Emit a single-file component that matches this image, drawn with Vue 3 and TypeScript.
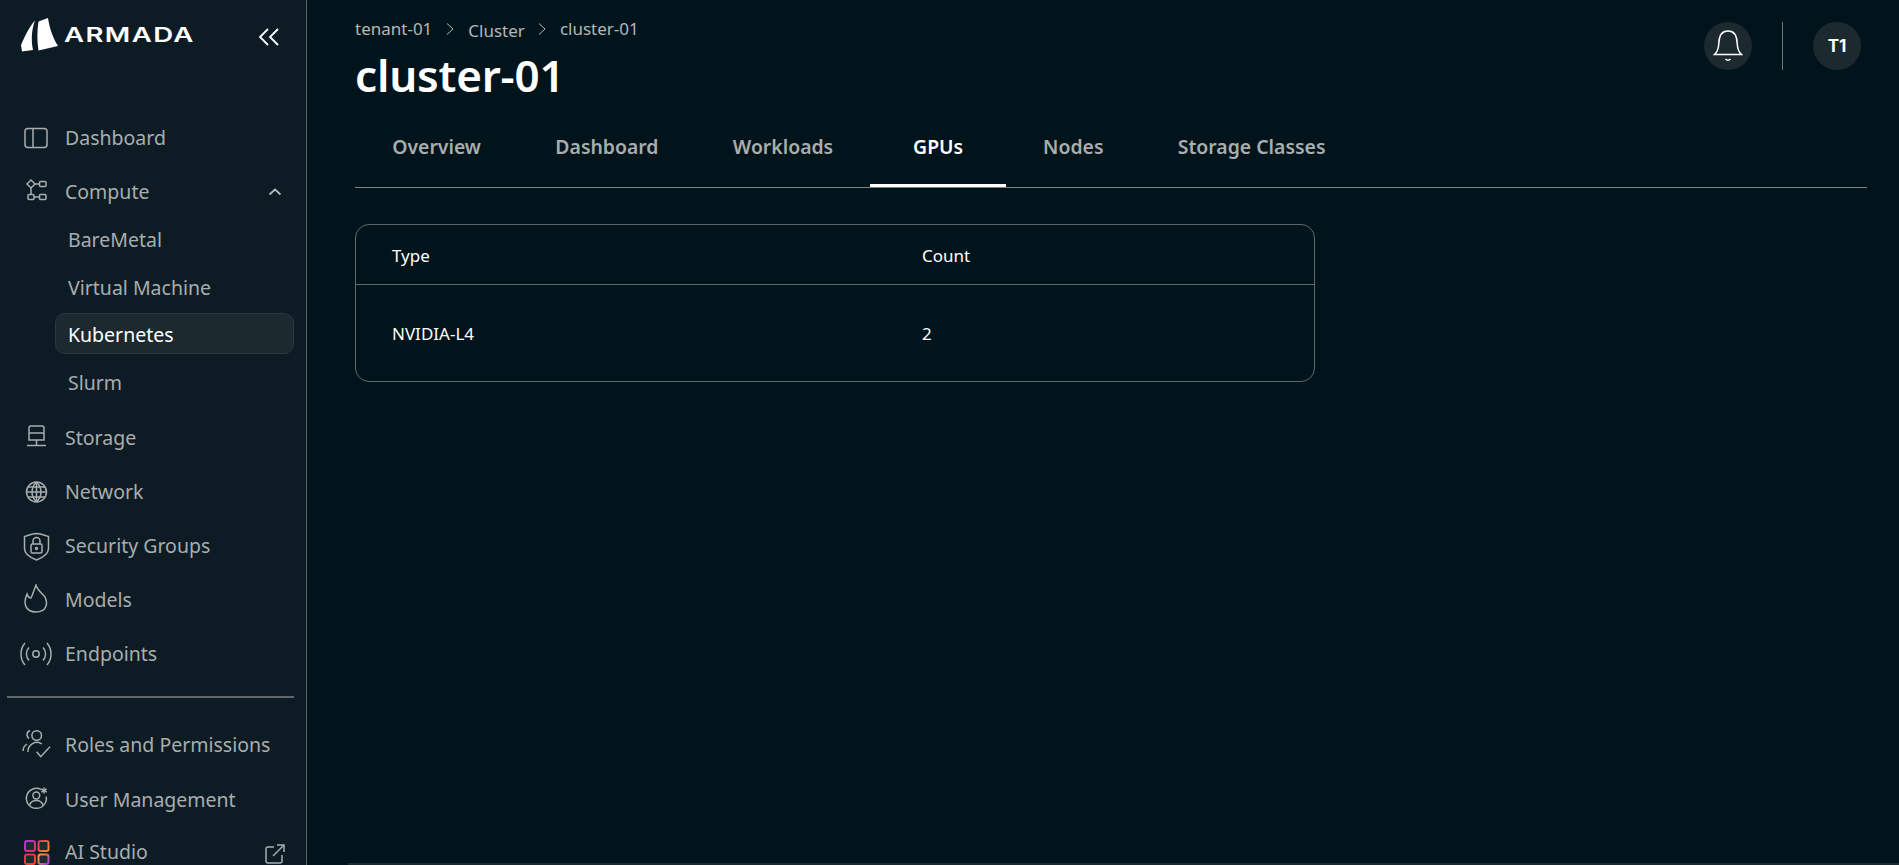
<script setup lang="ts">
interface NavItem {
  label: string
  paths: string[]
  circles?: [number, number, number][]
}

const topItems: NavItem[] = [
  { label: 'Storage', paths: ['M11 4h11a2 2 0 0 1 2 2v12H9V6a2 2 0 0 1 2-2Z', 'M9 11h15', 'M16.5 18v5', 'M7 23.5h19'] },
  {
    label: 'Network',
    paths: ['M6.5 16h20', 'M7.8 11h17.4', 'M7.8 21h17.4', 'M16.5 6v20', 'M16.5 6c-6 6-6 14 0 20', 'M16.5 6c6 6 6 14 0 20'],
    circles: [[16.5, 16, 10]],
  },
  {
    label: 'Security Groups',
    paths: [
      'M4.5 6.5C9 5 12.5 3.8 16.5 3.5c4 .3 7.5 1.5 12 3v12c0 5-5.500 9-12 11.500C10 27.500 4.500 23.500 4.500 18.500Z',
      'M12.500 14h8a1.500 1.500 0 0 1 1.500 1.500v6a1.500 1.500 0 0 1-1.500 1.500h-8a1.500 1.500 0 0 1-1.500-1.500v-6a1.500 1.500 0 0 1 1.500-1.500Z',
      'M13 14v-3a3.500 3.500 0 0 1 7 0v3',
    ],
    circles: [[16.5, 18.5, 1]],
  },
  { label: 'Models', paths: ['M16 1c1 5 6 8 9 12 3 6 2 15-9 15S3 19 7 10c1 3 2 4 4 4 2-4 3-8 5-13Z'] },
  {
    label: 'Endpoints',
    paths: ['M9 9.500a9.500 9.500 0 0 0 0 13', 'M23 9.500a9.500 9.500 0 0 1 0 13', 'M5 5a17 17 0 0 0 0 22', 'M27 5a17 17 0 0 1 0 22'],
    circles: [[16, 16, 3.2]],
  },
]

const bottomItems: NavItem[] = [
  {
    label: 'Roles and Permissions',
    paths: ['M10 1.500a4.500 4.500 0 0 0-1 8', 'M8 23a9 9 0 0 1 14-8', 'M3 22c0-3 1-5 4-7', 'M16.700 22.700l4 5 9.300-10'],
    circles: [[16.7, 6.5, 4.8]],
  },
  {
    label: 'User Management',
    paths: ['M21 5.500a10 10 0 1 0 5.200 7', 'M9.500 21.500c1-3.500 3.500-5 6.800-5s5.800 1.500 6.800 5', 'M24 3.500v6', 'M21.400 5l5.200 3', 'M26.600 5l-5.200 3'],
    circles: [[16.3, 11.5, 3.4]],
  },
]

const tabs = ['Overview', 'Dashboard', 'Workloads', 'GPUs', 'Nodes', 'Storage Classes']
const subItems = ['BareMetal', 'Virtual Machine', 'Kubernetes', 'Slurm']
</script>

<template>
  <div class="page">
    <aside class="sidebar">
      <div class="brand">
        <svg class="logo" width="40" height="36" viewBox="0 0 40 36">
          <path d="M15 2.500C9 9 4.500 19 1 27l1 6.500 11-1.500C11 22 11.500 12 15 2.500Z" fill="#fff" />
          <path d="M28 0l-9.500 3.500c-1.500 9-1.500 20 0 29L38 28C33 20 29.500 10 28 0Z" fill="#fff" />
        </svg>
        <span class="wordmark">ARMADA</span>
        <svg class="collapse" width="24" height="20" viewBox="0 0 24 20" fill="none" stroke="#fff" stroke-width="1.8">
          <path d="M11 2L3 10l8 8" />
          <path d="M21 2l-8 8 8 8" />
        </svg>
      </div>

      <nav class="nav first">
        <a class="item">
          <svg class="icon" width="32" height="32" viewBox="0 0 32 32">
            <path d="M8 6.500h16a3 3 0 0 1 3 3v13a3 3 0 0 1-3 3H8a3 3 0 0 1-3-3v-13a3 3 0 0 1 3-3Z" />
            <path d="M13 6.500v19" />
          </svg>
          <span>Dashboard</span>
        </a>
        <a class="item">
          <svg class="icon" width="32" height="32" viewBox="0 0 32 32">
            <path d="M11 4l4 4-4 4-4-4Z" />
            <path d="M15 8h4.500" />
            <path d="M11 12v6.500" />
            <path d="M14 21h5" />
            <rect x="19.500" y="5.500" width="6.500" height="5" rx="1" />
            <rect x="8" y="18.500" width="6" height="5" rx="1" />
            <rect x="19.500" y="18.500" width="6.500" height="5" rx="1" />
          </svg>
          <span>Compute</span>
          <svg class="caret" width="14" height="10" viewBox="0 0 14 10" fill="none" stroke="#b4b8b9" stroke-width="1.800">
            <path d="M1.500 7.500L7 2.500l5.500 5" />
          </svg>
        </a>
        <div class="subs">
          <a
            v-for="sub in subItems"
            :key="sub"
            class="sub"
            :class="{ active: sub === 'Kubernetes' }"
          >{{ sub }}</a>
        </div>
        <a v-for="item in topItems" :key="item.label" class="item">
          <svg class="icon" width="32" height="32" viewBox="0 0 32 32">
            <path v-for="d in item.paths" :key="d" :d="d" />
            <circle v-for="c in item.circles" :key="c[2]" :cx="c[0]" :cy="c[1]" :r="c[2]" />
          </svg>
          <span>{{ item.label }}</span>
        </a>
      </nav>

      <div class="rule"></div>

      <nav class="nav">
        <a v-for="item in bottomItems" :key="item.label" class="item">
          <svg class="icon" width="32" height="32" viewBox="0 0 32 32">
            <path v-for="d in item.paths" :key="d" :d="d" />
            <circle v-for="c in item.circles" :key="c[2]" :cx="c[0]" :cy="c[1]" :r="c[2]" />
          </svg>
          <span>{{ item.label }}</span>
        </a>
        <a class="item">
          <svg class="studio" width="32" height="32" viewBox="0 0 32 32" stroke-width="2">
            <defs>
              <linearGradient id="sq1" x1="0" y1="0" x2="1" y2="1">
                <stop offset="0" stop-color="#a33ad0" />
                <stop offset="1" stop-color="#d8366e" />
              </linearGradient>
              <linearGradient id="sq2" x1="0" y1="0" x2="1" y2="1">
                <stop offset="0" stop-color="#e0345c" />
                <stop offset="1" stop-color="#f98a2a" />
              </linearGradient>
              <linearGradient id="sq3" x1="0" y1="0" x2="1" y2="1">
                <stop offset="0" stop-color="#e8304e" />
                <stop offset="1" stop-color="#f2452d" />
              </linearGradient>
              <linearGradient id="sq4" x1="0" y1="0" x2="1" y2="1">
                <stop offset="0" stop-color="#f9a02c" />
                <stop offset="1" stop-color="#a33ad0" />
              </linearGradient>
            </defs>
            <rect x="5" y="3" width="10" height="10" rx="2" fill="#1e2b31" stroke="url(#sq1)" />
            <rect x="18.500" y="3" width="10" height="10" rx="2" fill="#1e2b31" stroke="url(#sq2)" />
            <rect x="5" y="16.500" width="10" height="9.500" rx="2" fill="#1e2b31" stroke="url(#sq3)" />
            <rect x="18.500" y="16.500" width="10" height="9.500" rx="2" fill="#1e2b31" stroke="url(#sq4)" />
          </svg>
          <span class="last-label">AI Studio</span>
          <svg class="external" width="22" height="22" viewBox="0 0 22 22" fill="none" stroke="#a9adae" stroke-width="1.500">
            <path d="M10 4H4a2 2 0 0 0-2 2v12a2 2 0 0 0 2 2h12a2 2 0 0 0 2-2v-6" />
            <path d="M9 13L20 2" />
            <path d="M13 2h7v7" />
          </svg>
        </a>
      </nav>
    </aside>

    <main class="main">
      <div class="content">
        <header class="header">
          <div>
            <div class="crumbs">
              <span>tenant-01</span>
              <svg width="10" height="14" viewBox="0 0 10 14" fill="none" stroke="#b4b8b9" stroke-width="1">
                <path d="M2 1.500L8 7l-6 5.500" />
              </svg>
              <span class="crumb-low">Cluster</span>
              <svg width="10" height="14" viewBox="0 0 10 14" fill="none" stroke="#b4b8b9" stroke-width="1">
                <path d="M2 1.500L8 7l-6 5.500" />
              </svg>
              <span>cluster-01</span>
            </div>
            <h1 class="title">cluster-01</h1>
          </div>
          <div class="actions">
            <button class="round">
              <svg width="30" height="34" viewBox="0 0 30 34" fill="none" stroke="#fff" stroke-width="1.500">
                <path d="M1.500 25.500c3-2.500 4-5 4.300-11C6 7 9 2 15 2s9 5 9.200 12.500c.3 6 1.300 8.500 4.300 11Z" />
                <path d="M12.500 30c1.500 1.500 3.500 1.500 5 0" />
              </svg>
            </button>
            <span class="vbar"></span>
            <button class="round initials">T1</button>
          </div>
        </header>

        <div class="tabs">
          <a
            v-for="tab in tabs"
            :key="tab"
            class="tab"
            :class="{ current: tab === 'GPUs' }"
          >{{ tab }}</a>
        </div>

        <div class="table-wrap">
          <table class="table">
            <thead>
              <tr>
                <th>Type</th>
                <th>Count</th>
              </tr>
            </thead>
            <tbody>
              <tr>
                <td>NVIDIA-L4</td>
                <td>2</td>
              </tr>
            </tbody>
          </table>
        </div>
      </div>
      <div class="footer-edge"></div>
    </main>
  </div>
</template>

<style scoped>
.page {
  display: flex;
  height: 865px;
  overflow: hidden;
  background: #01141c;
  font-family: "Noto Sans", "Open Sans", sans-serif;
}

.sidebar {
  width: 306px;
  flex-shrink: 0;
  box-sizing: content-box;
  background: #0d1c24;
  border-right: 1px solid #5f686c;
}

.brand {
  display: flex;
  align-items: center;
  height: 72px;
  padding-left: 20px;
}

.logo {
  flex-shrink: 0;
  margin-top: -1px;
}

.wordmark {
  margin-left: 4px;
  color: #fff;
  font-family: Inter, sans-serif;
  font-weight: 600;
  font-size: 20px;
  letter-spacing: 1px;
  transform: scaleX(1.38);
  transform-origin: left center;
  margin-top: -2px;
}

.collapse {
  margin-left: auto;
  margin-right: 25px;
  margin-top: 1px;
}

.nav {
  display: flex;
  flex-direction: column;
}

.nav.first {
  padding-top: 39px;
}

.item {
  display: flex;
  align-items: center;
  height: 54.2px;
  padding-left: 20px;
  color: #a9adae;
  font-size: 19.5px;
  line-height: 20px;
}

.item > span {
  margin-left: 13px;
}

.item > .last-label {
  margin-bottom: 4px;
}

.icon {
  flex-shrink: 0;
  fill: none;
  stroke: #a9adae;
  stroke-width: 1.5;
}

.studio {
  flex-shrink: 0;
}

.caret {
  margin-left: auto;
  margin-right: 24px;
}

.external {
  margin-left: auto;
  margin-right: 20px;
}

.subs {
  display: flex;
  flex-direction: column;
  gap: 6.7px;
  margin: -2px 12px 9px 55px;
}

.sub {
  display: flex;
  align-items: center;
  height: 41px;
  padding: 3px 0 0 12px;
  border: 1px solid transparent;
  border-radius: 10px;
  box-sizing: border-box;
  color: #a9adae;
  font-size: 19.5px;
}

.sub.active {
  background: #1c2a30;
  border-color: #2b383e;
  color: #fff;
}

.rule {
  height: 2px;
  margin: 15px 12px 20px 7px;
  background: #5f686c;
}

.main {
  flex: 1;
  min-width: 0;
  display: flex;
  flex-direction: column;
}

.content {
  flex: 1;
  padding: 0 32px 0 48px;
}

.header {
  display: flex;
  justify-content: space-between;
  height: 103px;
}

.crumbs {
  display: flex;
  align-items: center;
  gap: 13px;
  padding-top: 17px;
  color: #b4b8b9;
  font-size: 17px;
  line-height: 24px;
}

.crumb-low {
  position: relative;
  top: 2px;
  margin-right: -1px;
}

.title {
  margin: 4px 0 0;
  color: #fff;
  font-size: 44px;
  font-weight: 600;
  line-height: 60px;
  letter-spacing: -0.2px;
}

.actions {
  display: flex;
  align-items: flex-start;
  padding-top: 22px;
  padding-right: 6px;
}

.round {
  width: 48px;
  height: 48px;
  padding: 0;
  border: 0;
  border-radius: 50%;
  background: #1c2a30;
  color: #fff;
  display: flex;
  align-items: center;
  justify-content: center;
}

.initials {
  font-family: Inter, sans-serif;
  font-size: 17px;
  font-weight: 700;
}

.vbar {
  width: 1px;
  height: 48px;
  margin: 0 30px;
  background: #6d7578;
}

.tabs {
  display: flex;
  height: 85px;
  box-sizing: border-box;
  border-bottom: 1px solid #7a8184;
}

.tab {
  display: flex;
  align-items: center;
  justify-content: center;
  height: 84px;
  padding: 2px 37.2px 0;
  box-sizing: border-box;
  color: #a9adae;
  font-size: 19.4px;
  font-weight: 600;
}

.tab.current {
  min-width: 135.5px;
  color: #fff;
  box-shadow: inset 0 -3px 0 #fff;
}

.table-wrap {
  width: 960px;
  margin-top: 36px;
  border: 1px solid #5f686c;
  border-radius: 14px;
  box-sizing: border-box;
}

.table {
  width: 100%;
  border-collapse: collapse;
  table-layout: fixed;
  color: #fff;
  font-size: 17px;
}

.table th,
.table td {
  padding: 0 0 0 36px;
  text-align: left;
  font-weight: 400;
}

.table th:first-child,
.table td:first-child {
  width: 494px;
}

.table th {
  height: 57px;
  padding-top: 2px;
  border-bottom: 1px solid #5f686c;
}

.table td {
  height: 96px;
}

.footer-edge {
  height: 2px;
  margin-left: 41px;
  background: #1c2a30;
}
</style>

<style>
html,
body {
  margin: 0;
  background: #01141c;
}
</style>
